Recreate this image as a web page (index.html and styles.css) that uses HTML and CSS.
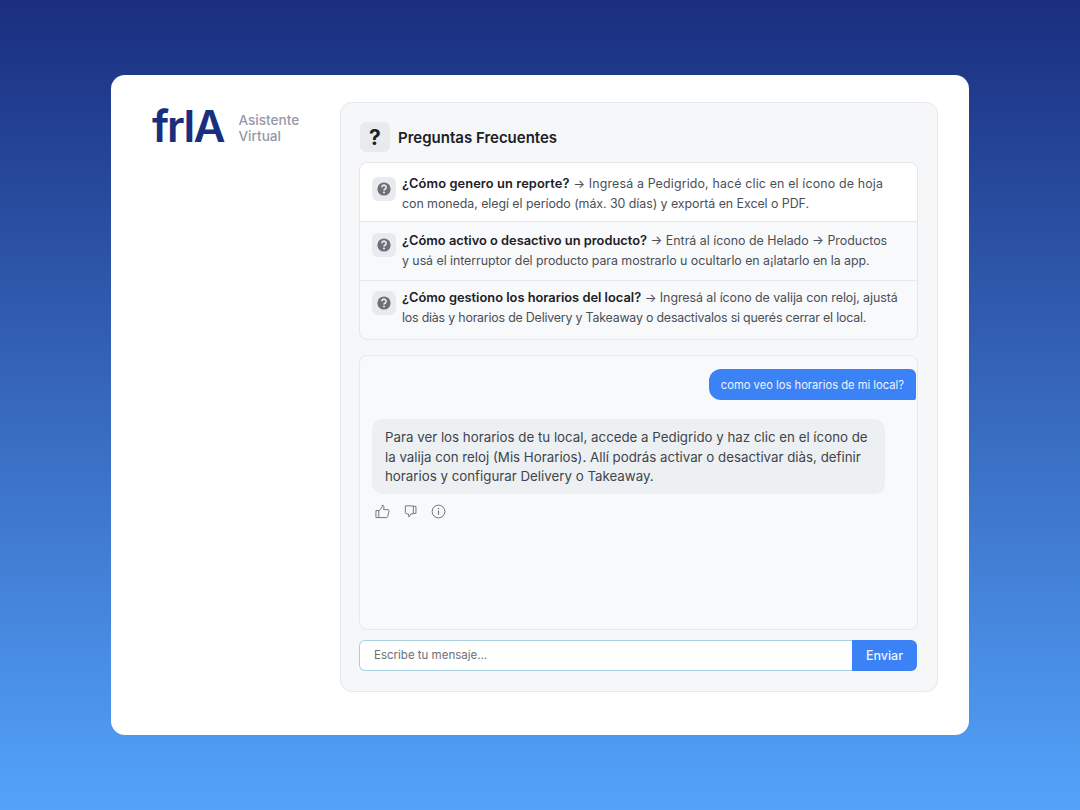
FILE: index.html
```html
<!DOCTYPE html>
<html lang="es">
<head>
<meta charset="utf-8">
<title>frIA Asistente Virtual</title>
<link rel="stylesheet" href="styles.css">
</head>
<body>
<main class="card">
  <aside class="brand">
    <div class="logo">frIA</div>
    <div class="tagline">Asistente<br>Virtual</div>
  </aside>
  <section class="panel">
    <header class="panel-head">
      <span class="head-icon">?</span>
      <h1 class="panel-title">Preguntas Frecuentes</h1>
    </header>
    <div class="faq">
      <div class="faq-row faq-row-first">
        <span class="faq-icon"><svg viewBox="0 0 16 16" class="faq-svg"><circle cx="8" cy="8" r="6.6" fill="#6b7078"/><path d="M5.9 6.3a2.1 2.1 0 1 1 3.3 1.7c-.8.5-1.2.9-1.2 1.6" fill="none" stroke="#e9ebee" stroke-width="1.7"/><circle cx="8" cy="11.6" r="1" fill="#e9ebee"/></svg></span>
        <p class="faq-text"><span class="wide"><b>¿Cómo genero un reporte?</b> → Ingresá a Pedigrido, hacé clic en el ícono de hoja</span><br><span class="tight">con moneda, elegí el período (máx. 30 días) y exportá en Excel o PDF.</span></p>
      </div>
      <div class="faq-row faq-row-mid">
        <span class="faq-icon"><svg viewBox="0 0 16 16" class="faq-svg"><circle cx="8" cy="8" r="6.6" fill="#6b7078"/><path d="M5.9 6.3a2.1 2.1 0 1 1 3.3 1.7c-.8.5-1.2.9-1.2 1.6" fill="none" stroke="#e9ebee" stroke-width="1.7"/><circle cx="8" cy="11.6" r="1" fill="#e9ebee"/></svg></span>
        <p class="faq-text"><b>¿Cómo activo o desactivo un producto?</b> → Entrá al ícono de Helado → Productos<br><span class="tight">y usá el interruptor del producto para mostrarlo u ocultarlo en a¡latarlo en la app.</span></p>
      </div>
      <div class="faq-row">
        <span class="faq-icon"><svg viewBox="0 0 16 16" class="faq-svg"><circle cx="8" cy="8" r="6.6" fill="#6b7078"/><path d="M5.9 6.3a2.1 2.1 0 1 1 3.3 1.7c-.8.5-1.2.9-1.2 1.6" fill="none" stroke="#e9ebee" stroke-width="1.7"/><circle cx="8" cy="11.6" r="1" fill="#e9ebee"/></svg></span>
        <p class="faq-text"><b>¿Cómo gestiono los horarios del local?</b> <span class="tight">→ Ingresá al ícono de valija con reloj, ajustá</span><br><span class="tighter">los diàs y horarios de Delivery y Takeaway o desactivalos si querés cerrar el local.</span></p>
      </div>
    </div>
    <div class="chat">
      <div class="msg-user">como veo los horarios de mi local?</div>
      <div class="msg-bot">Para ver los horarios de tu local, accede a Pedigrido y haz clic en el ícono de la valija con reloj (Mis Horarios). Allí podrás activar o desactivar diàs, definir horarios y configurar Delivery o Takeaway.</div>
      <div class="msg-actions">
        <svg class="act" viewBox="0 0 16 16"><path d="M1 7h3v7.500H1zM4 7.500l3-3.300c.6-.7.7-1.500.7-3 1.500 0 2 1.500 1.800 3L9.200 6h4.600c.8 0 1.300.7 1.100 1.500l-1.300 5.800c-.2.8-.7 1.200-1.500 1.200H4" fill="none" stroke="#6b7078" stroke-width="1" stroke-linejoin="round"/></svg>
        <svg class="act" viewBox="0 0 16 16"><path d="M2.500 2h8.500v8.500H8.500l-2.200 3.300-.6-3.300H4c-.9 0-1.500-.6-1.500-1.500zM11 2.500h2.800v7.500H11" fill="none" stroke="#6b7078" stroke-width="1" stroke-linejoin="round"/></svg>
        <svg class="act" viewBox="0 0 16 16"><circle cx="8" cy="8" r="6.800" fill="none" stroke="#6b7078" stroke-width="1"/><path d="M8 7v4.500" stroke="#6b7078" stroke-width="1.200"/><circle cx="8" cy="4.800" r=".8" fill="#6b7078"/></svg>
      </div>
    </div>
    <form class="composer">
      <div class="composer-input">Escribe tu mensaje...</div>
      <div class="composer-send">Enviar</div>
    </form>
  </section>
</main>
</body>
</html>
```
FILE: styles.css
```css
* { box-sizing: border-box; }
html, body { height: 100%; }
body {
  margin: 0;
  height: 810px;
  overflow: hidden;
  padding: 75px 111px;
  background: linear-gradient(180deg, #1a2e7f 0%, #53a3fb 100%);
  font-family: Inter, "Noto Sans", sans-serif;
  color: #3f444c;
}
.card {
  width: 858px;
  height: 660px;
  background: #fff;
  border-radius: 14px;
  padding: 27px 31px 43px 41px;
  display: flex;
}
.brand {
  width: 188px;
  display: flex;
  align-items: flex-start;
  gap: 15px;
}
.logo {
  font-size: 44px;
  line-height: 48px;
  font-weight: 620;
  color: #1a2e7f;
  letter-spacing: -2px;
}
.tagline {
  font-size: 13.600px;
  line-height: 16px;
  font-weight: 500;
  color: #9599a8;
  margin-top: 10px;
}
.panel {
  flex: 1;
  background: #f6f7f9;
  border: 1px solid #e5e8ec;
  border-radius: 12px;
  padding: 18px 19px 20px 18px;
  display: flex;
  flex-direction: column;
}
.panel-head {
  display: flex;
  align-items: center;
  gap: 8px;
  height: 32px;
  margin-bottom: 9px;
  padding-left: 1px;
}
.head-icon {
  width: 30px;
  height: 30px;
  border-radius: 6px;
  background: #e8eaed;
  color: #1c2027;
  font-size: 21px;
  font-weight: 700;
  display: flex;
  align-items: center;
  justify-content: center;
}
.panel-title {
  margin: 0;
  font-size: 15px;
  font-weight: 600;
  color: #1c2027;
}
.faq {
  height: 178px;
  border: 1px solid #e3e6ea;
  border-radius: 8px;
  display: flex;
  flex-direction: column;
  background: #f8f9fa;
  margin-bottom: 15px;
}
.faq-row {
  flex: 1;
  display: flex;
  gap: 6px;
  padding: 7px 12px 0;
  border-top: 1px solid #e6e8eb;
}
.faq-row-first {
  flex: none;
  height: 58px;
  background: #fff;
  border-top: 0;
  border-radius: 8px 8px 0 0;
  padding-top: 11px;
}
.faq-row-mid {
  flex: none;
  height: 59px;
  padding-top: 9px;
}
.faq-icon {
  flex: none;
  width: 24px;
  height: 24px;
  margin-top: 3px;
  border-radius: 6px;
  background: #e8eaed;
  display: flex;
  align-items: center;
  justify-content: center;
}
.faq-row-mid .faq-icon { margin-top: 2px; }
.faq-svg { width: 16px; height: 16px; }
.faq-text {
  margin: 0;
  font-size: 12.400px;
  line-height: 19.500px;
  white-space: nowrap;
  color: #4a4f57;
}
.faq-text b {
  font-size: 12.850px;
  font-weight: 600;
  color: #1c2027;
}
.wide { letter-spacing: .15px; }
.wide b { letter-spacing: .09px; }
.tight { letter-spacing: -.05px; }
.tighter { letter-spacing: -.2px; }
.chat {
  height: 275px;
  border: 1px solid #e5e8ec;
  border-radius: 8px;
  background: #f8f9fa;
  padding: 13px 1px 0 12px;
  display: flex;
  flex-direction: column;
}
.msg-user {
  align-self: flex-end;
  height: 31px;
  padding: 0 12px;
  background: #3b82f6;
  color: #eef4ff;
  font-size: 11.200px;
  line-height: 32px;
  border-radius: 12px 6px 2px 12px;
}
.msg-bot {
  width: 513px;
  margin-top: 19px;
  padding: 9px 14px 7px 13px;
  background: #edf0f2;
  border-radius: 10px;
  font-size: 13.300px;
  line-height: 19.700px;
  color: #3f444c;
}
.msg-actions {
  display: flex;
  gap: 13px;
  margin-top: 10px;
  padding-left: 3px;
}
.act { width: 15px; height: 15px; }
.composer {
  margin-top: 10px;
  margin-right: 1px;
  height: 31px;
  display: flex;
}
.composer-input {
  flex: 1;
  background: #fff;
  border: 1.500px solid #a8d0e0;
  border-left: 1px solid #b5c9d6;
  border-right: 0;
  border-radius: 6px 0 0 6px;
  padding-left: 14px;
  font-size: 11.500px;
  line-height: 28px;
  color: #6b7078;
}
.composer-send {
  width: 65px;
  background: #3b82f6;
  color: #eef4ff;
  border-radius: 0 6px 6px 0;
  font-size: 12.500px;
  font-weight: 500;
  text-align: center;
  line-height: 31px;
}
```
